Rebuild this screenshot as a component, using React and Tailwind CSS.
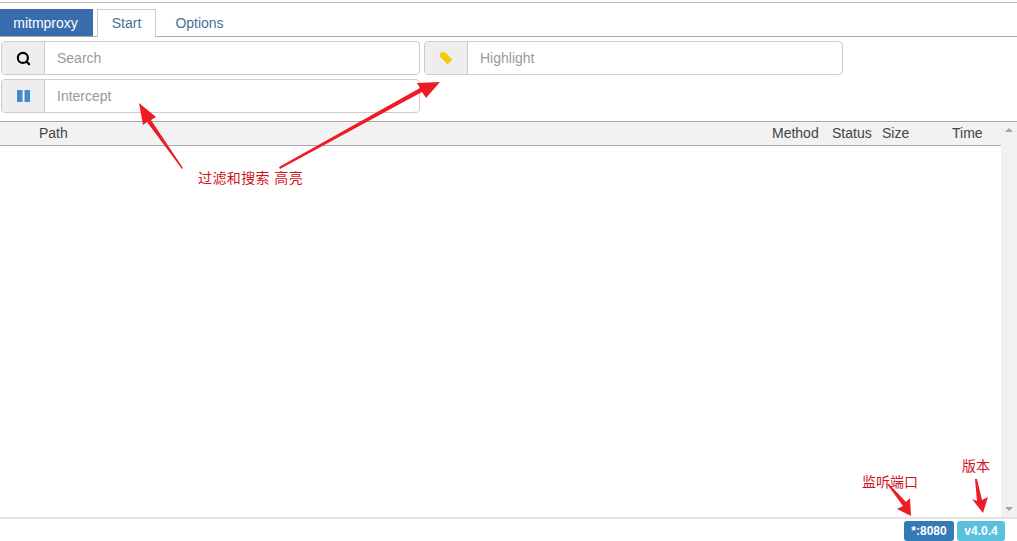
import { Search } from 'lucide-react';

const font = { arial: 'font-["Liberation_Sans",Arial,sans-serif]' };

const Tag = () => (
  <svg width="14" height="14" viewBox="0 0 14 14">
    <path d="M1 2.2 L1.6 1.4 L6 1.2 L12.8 8 Q13.2 8.6 12.8 9.2 L9 12.8 Q8.4 13.2 7.8 12.8 L1.2 6 Z" fill="#f5c90c" />
  </svg>
);

const PauseBars = () => (
  <svg width="13" height="12" viewBox="0 0 13 12">
    <path d="M0 0h5.5v12H0zM7.5 0H13v12H7.5z" fill="#428bca" />
  </svg>
);

const FilterInput = ({ icon, placeholder, className = '' }) => (
  <div className={`flex h-[34px] w-[419px] rounded-[4px] border border-[#ccc] bg-white ${className}`}>
    <div className="flex w-[43px] shrink-0 items-center justify-center rounded-l-[3px] border-r border-[#ccc] bg-[#eee]">
      {icon}
    </div>
    <div className="pl-3 text-[14px] leading-[32px] text-[#999]">{placeholder}</div>
  </div>
);

// red annotation arrow, drawn as a tapered shaft with a head
const Arrow = ({ points }) => <polygon points={points} fill="#ee1c25" />;

export default function App() {
  return (
    <div className={`relative flex h-[541px] w-[1017px] flex-col overflow-hidden bg-white pt-[2px] text-[14px] text-[#444] ${font.arial}`}>
      <div className="h-px bg-[#bbb]" />

      <nav className="flex h-[34px] items-end border-b border-[#aaa] pt-[6px]">
        <div className="flex h-[27px] w-[93px] items-center justify-center bg-[#396cad] pr-[2px] pt-[2px] text-white">mitmproxy</div>
        <div className="relative top-px ml-1 flex h-[28px] w-[59px] items-center justify-center border border-b-0 border-[#ccc] bg-white">
          <span className="text-[#4a6f98]">Start</span>
        </div>
        <div className="flex h-[27px] w-[87px] items-center justify-center pt-[2px] text-[#4a6f98]">Options</div>
      </nav>

      <div className="flex flex-col gap-[4px] pl-px pt-[4px]">
        <div className="flex gap-[4px]">
          <FilterInput icon={<Search size={15} strokeWidth={3.5} className="text-black" />} placeholder="Search" />
          <FilterInput icon={<Tag />} placeholder="Highlight" />
        </div>
        <FilterInput icon={<PauseBars />} placeholder="Intercept" />
      </div>

      <div className="mt-[8px] flex min-h-0 flex-1">
        <div className="flex min-w-0 flex-1 flex-col">
          <div className="flex h-[25px] items-center border-y border-[#aaa] bg-[#f2f2f2]">
            <span className="ml-[39px] flex-1">Path</span>
            <span className="w-[60px]">Method</span>
            <span className="w-[50px]">Status</span>
            <span className="w-[70px]">Size</span>
            <span className="w-[49px]">Time</span>
          </div>
          <div className="flex-1 bg-white" />
        </div>
        <div className="flex w-[16px] shrink-0 flex-col items-center justify-between border-t border-[#aaa] bg-[#f1f1f1] py-[6px]">
          <div className="h-0 w-0 border-x-[4px] border-b-[4px] border-x-transparent border-b-[#a3a3a3]" />
          <div className="h-0 w-0 border-x-[4px] border-t-[4px] border-x-transparent border-t-[#a3a3a3]" />
        </div>
      </div>

      <footer className="flex h-[24px] shrink-0 justify-end gap-[3px] border-t-2 border-[#e3e3e3] pr-[12px] pt-[2px] text-[12px] font-bold leading-[20px] text-white">
        <div className="h-[20px] w-[50px] rounded-[3px] bg-[#337ab7] text-center">*:8080</div>
        <div className="h-[20px] w-[48px] rounded-[3px] bg-[#5bc0de] text-center">v4.0.4</div>
      </footer>

      {/* annotations on top of the screenshot */}
      <svg className="absolute inset-0" width="1017" height="541">
        <Arrow points="183,168 151,120 156,117 139,103 143,125 147,122 182,169" />
        <Arrow points="280,169 422,92 426,98 440,82 417,83 420,88 279,167" />
        <Arrow points="887,484 903,506 897,509 911,516 910,498 906,502 889,484" />
        <Arrow points="975,479 977,501 972,499 983,513 988,497 982,500 977,479" />
      </svg>
      <span className={`absolute left-[198px] top-[170px] text-[14px] leading-[16px] tracking-[0.4px] text-[#d0141c] font-["Liberation_Sans","Noto_Sans_CJK_SC",sans-serif]`}>过滤和搜索 高亮</span>
      <span className={`absolute left-[862px] top-[474px] text-[14px] leading-[16px] text-[#d0141c] font-["Liberation_Sans","Noto_Sans_CJK_SC",sans-serif]`}>监听端口</span>
      <span className={`absolute left-[962px] top-[458px] text-[14px] leading-[16px] text-[#d0141c] font-["Liberation_Sans","Noto_Sans_CJK_SC",sans-serif]`}>版本</span>
    </div>
  );
}
